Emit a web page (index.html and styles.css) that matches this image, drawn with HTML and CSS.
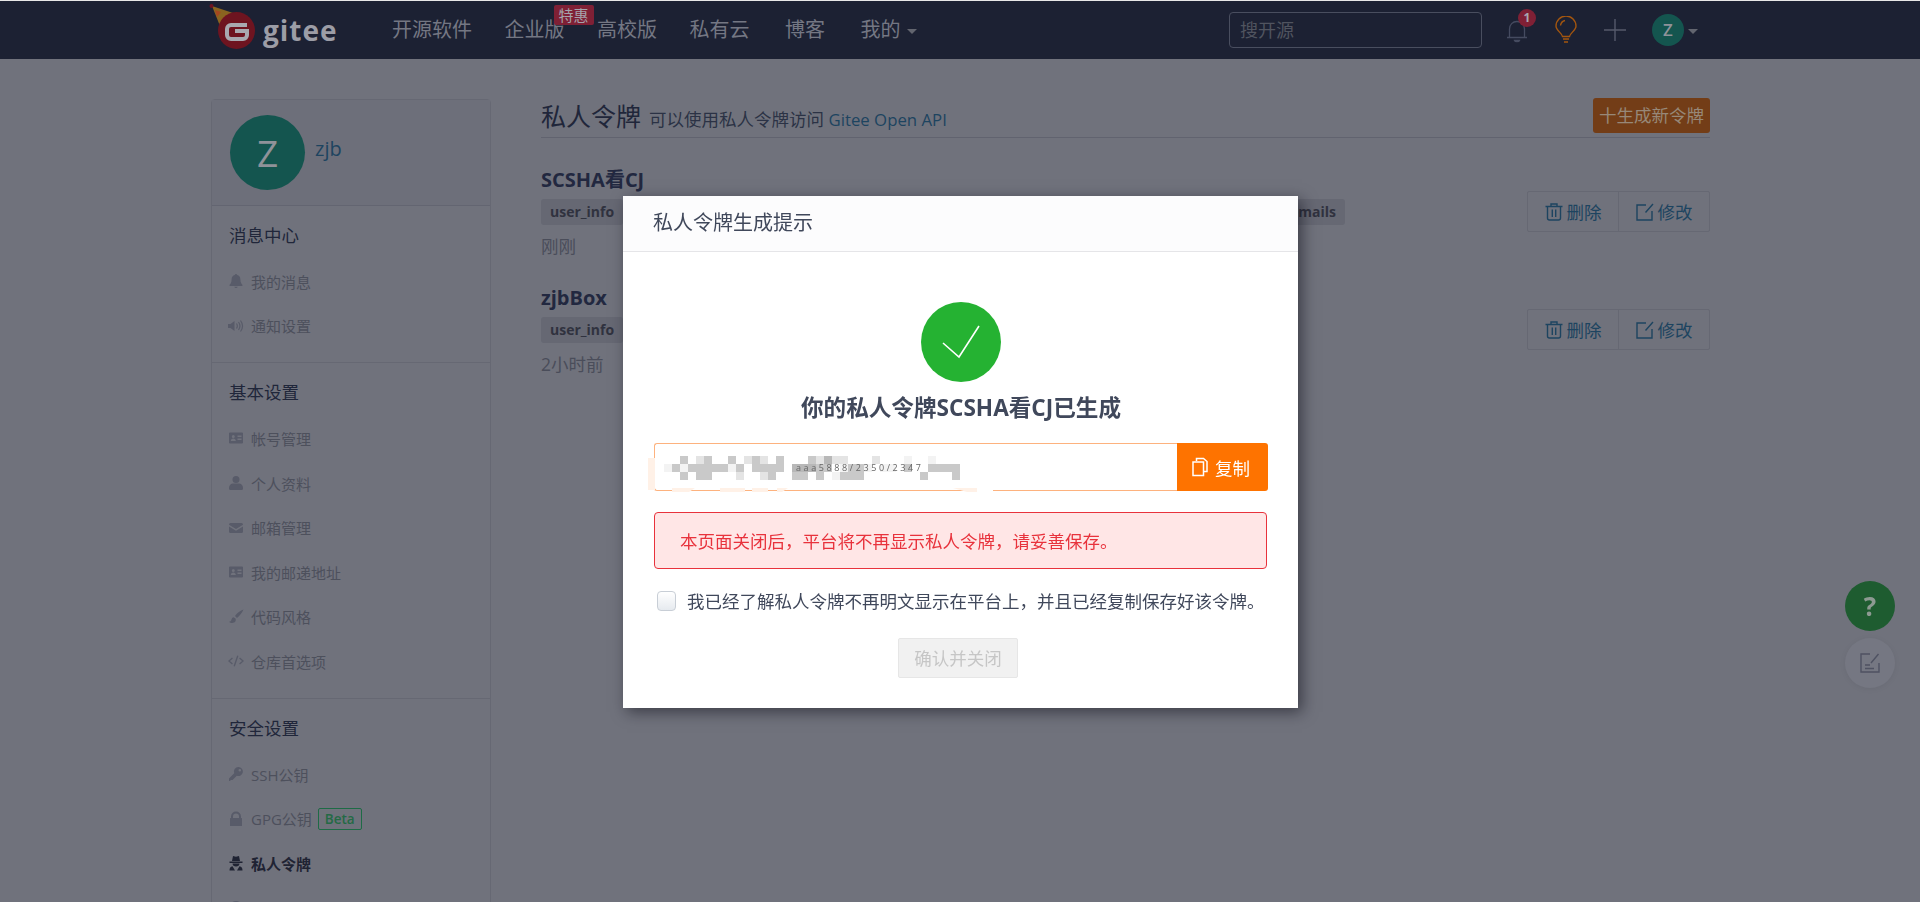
FILE: index.html
```html
<!DOCTYPE html>
<html lang="zh-CN">
<head>
    <meta charset="UTF-8">
    <meta name="viewport" content="width=device-width, initial-scale=1.0">
    <title>私人令牌 - Gitee</title>
    <link rel="stylesheet" href="styles.css">
</head>
<body>
    <svg class="icon-defs" aria-hidden="true">
        <symbol id="i-card" viewBox="0 0 16 16"><path fill-rule="evenodd" d="M2 2.500h12a1 1 0 0 1 1 1v9a1 1 0 0 1-1 1H2a1 1 0 0 1-1-1v-9a1 1 0 0 1 1-1zM5.300 5a1.500 1.500 0 1 0 0 3 1.500 1.500 0 0 0 0-3zM2.800 11h5c0-1.600-1-2.500-2.500-2.500S2.800 9.400 2.800 11zM9.500 5.500V7h4V5.500zM9.500 8.500V10h4V8.500z"/></symbol>
        <symbol id="i-trash" viewBox="0 0 18 18"><path fill="none" stroke="currentColor" stroke-width="1.400" d="M.5 3.500h17M2.500 3.500v11.500a2 2 0 0 0 2 2h9a2 2 0 0 0 2-2V3.500M6 3.500V1h6v2.500M7.300 6.500v7.500M10.700 6.500v7.500"/></symbol>
        <symbol id="i-edit" viewBox="0 0 18 18"><path fill="none" stroke="currentColor" stroke-width="1.400" d="M10 2H1v15h15V8M17 1l-7.500 8.500"/></symbol>
    </svg>

    <nav class="navbar">
        <a class="logo">
            <svg class="logo-mark" width="50" height="50" viewBox="0 0 50 50">
                <polygon points="4,4 25,11 12,24" fill="#8a6420"/>
                <path d="M7 8l6 2-4 5zM13 18l5-5 3 1-7 7z" fill="#a5461f"/>
                <circle cx="3.500" cy="4" r="2" fill="#6e1420"/>
                <circle cx="28.500" cy="28.500" r="18.500" fill="#6e1420"/>
                <path d="M39 23H23a4 4 0 0 0-4 4v6a4 4 0 0 0 4 4h12a4 4 0 0 0 4-4v-4H27" fill="none" stroke="#a8a9b0" stroke-width="4"/>
            </svg>
            <span class="logo-text">gitee</span>
        </a>
        <div class="nav-menu">
            <a class="nav-item">开源软件</a>
            <a class="nav-item nav-badged">企业版<span class="nav-badge">特惠</span></a>
            <a class="nav-item">高校版</a>
            <a class="nav-item">私有云</a>
            <a class="nav-item">博客</a>
            <a class="nav-item nav-mine">我的<i class="caret"></i></a>
        </div>
        <div class="nav-right">
            <div class="search-box">搜开源</div>
            <a class="nav-icon nav-bell">
                <svg width="22" height="26" viewBox="0 0 22 26"><path d="M1 20.500h20M3.500 20.500v-8.500c0-4.300 3.200-7.500 7.500-7.500s7.500 3.200 7.500 7.500v8.500M8.500 23.500c.5 1.500 4.500 1.500 5 0z" fill="none" stroke="#454b60" stroke-width="1.300"/></svg>
                <span class="bell-count">1</span>
            </a>
            <a class="nav-icon">
                <svg width="22" height="28" viewBox="0 0 22 28"><path d="M7.500 20.500C7 17 1 14.500 1 10a10 10 0 0 1 20 0c0 4.500-6 7-6.500 10.500zM5.500 9.500C6 6.500 7.500 5 10 4.500M8 23h6M9 26h4" fill="none" stroke="#a3560f" stroke-width="1.400"/></svg>
            </a>
            <a class="nav-icon">
                <svg width="22" height="22" viewBox="0 0 22 22"><path d="M0 11h22M11 0v22" stroke="#555a6b" stroke-width="1.400"/></svg>
            </a>
            <a class="nav-user"><span class="nav-avatar">Z</span><i class="caret"></i></a>
        </div>
    </nav>

    <div class="page">
        <aside class="sidebar">
            <div class="side-head">
                <span class="side-avatar">Z</span>
                <a class="side-name">zjb</a>
            </div>
            <section class="side-group">
                <h4>消息中心</h4>
                <a class="side-item"><svg viewBox="0 0 16 16"><path d="M8 1a1.300 1.300 0 0 0-1.200 1.100C4.800 2.600 3.600 4.300 3.600 6.500c0 3-1 4.200-2 5.300V13h12.800v-1.200c-1-1.100-2-2.300-2-5.300 0-2.200-1.200-3.900-3.200-4.400A1.300 1.300 0 0 0 8 1zM6.300 13.800a1.800 1.800 0 0 0 3.400 0z"/></svg>我的消息</a>
                <a class="side-item"><svg viewBox="0 0 16 16"><path d="M0 6h2.500L6.500 3v10l-4-3H0z"/><path d="M8.500 5.500c1 1.500 1 3.500 0 5M10.500 4c1.800 2.500 1.800 5.500 0 8M12.500 2.500c2.600 3.500 2.600 7.500 0 11" fill="none" stroke="currentColor" stroke-width="1.200"/></svg>通知设置</a>
            </section>
            <section class="side-group">
                <h4>基本设置</h4>
                <a class="side-item"><svg viewBox="0 0 16 16"><use href="#i-card"/></svg>帐号管理</a>
                <a class="side-item"><svg viewBox="0 0 16 16"><circle cx="8" cy="4.500" r="3.500"/><path d="M1 13c0-3 2-4.500 4-4.500h6c2 0 4 1.500 4 4.500v.5a1.500 1.500 0 0 1-1.500 1.500h-11A1.500 1.500 0 0 1 1 13.500z"/></svg>个人资料</a>
                <a class="side-item"><svg viewBox="0 0 16 16"><path d="M1 4.500A1.500 1.500 0 0 1 2.500 3h11A1.500 1.500 0 0 1 15 4.500v.3L8 9 1 4.800zM1 6.600v4.900A1.500 1.500 0 0 0 2.500 13h11a1.500 1.500 0 0 0 1.500-1.500V6.600l-7 4.200z"/></svg>邮箱管理</a>
                <a class="side-item"><svg viewBox="0 0 16 16"><use href="#i-card"/></svg>我的邮递地址</a>
                <a class="side-item"><svg viewBox="0 0 16 16"><path d="M15.500.5c-3 1-6.500 3.500-8.500 6.500l2 2c2.500-2 5-5 6.500-8.500zM5.500 8.200C3.500 8.500 3.800 10.500 3 11.800c-.5.800-1.500 1-2 1 1.500 1.700 5 1.700 6.300-.2.800-1.200.5-2.700-.1-3.300z"/></svg>代码风格</a>
                <a class="side-item"><svg viewBox="0 0 18 16"><path d="M5 4.500L1 8l4 3.500M13 4.500L17 8l-4 3.500M11 2L7 14" fill="none" stroke="currentColor" stroke-width="1.500"/></svg>仓库首选项</a>
            </section>
            <section class="side-group">
                <h4>安全设置</h4>
                <a class="side-item"><svg viewBox="0 0 16 16"><path fill-rule="evenodd" d="M10.500 1a4.500 4.500 0 1 1-1.700 8.700L4.500 14H2.800L2 15H1v-2.500l5.200-5.300A4.500 4.500 0 0 1 10.500 1zM11.800 3a1.300 1.300 0 1 0 0 2.600 1.300 1.300 0 0 0 0-2.600z"/></svg>SSH公钥</a>
                <a class="side-item"><svg viewBox="0 0 16 16"><path d="M3 7V5.500a5 5 0 0 1 10 0V7h.5a.5.500 0 0 1 .5.500V15H2V7.500a.5.500 0 0 1 .5-.5zM5 7h6V5.500a3 3 0 0 0-6 0z"/></svg>GPG公钥<span class="beta">Beta</span></a>
                <a class="side-item active"><svg viewBox="0 0 16 16"><path d="M5 1L8 1.800 11 1l1 5H4zM1.500 6.500h13V8h-13zM4.500 8.500h7c0 1.800-1.500 3-3.500 3s-3.500-1.200-3.500-3zM1.500 15.500c0-2.500 1-4 3-4.300L7 15.500zM14.500 15.500c0-2.500-1-4-3-4.300L9 15.500z"/></svg>私人令牌</a>
                <a class="side-item"><svg viewBox="0 0 16 16"><circle cx="8" cy="8" r="7"/></svg></a>
            </section>
        </aside>

        <main class="content">
            <div class="content-head">
                <div class="head-text">
                    <span class="head-title">私人令牌</span>
                    <span class="head-desc">可以使用私人令牌访问 <a>Gitee Open API</a></span>
                </div>
                <a class="btn-new">十生成新令牌</a>
            </div>

            <div class="token-row">
                <div class="token-info">
                    <div class="token-name">SCSHA看CJ</div>
                    <div class="token-tags token-tags-full">
                        <span class="tag">user_info</span>
                        <span class="tag">emails</span>
                    </div>
                    <div class="token-time">刚刚</div>
                </div>
                <div class="token-actions">
                    <a class="action"><svg width="18" height="18"><use href="#i-trash"/></svg>删除</a>
                    <a class="action"><svg width="18" height="18"><use href="#i-edit"/></svg>修改</a>
                </div>
            </div>

            <div class="token-row">
                <div class="token-info">
                    <div class="token-name">zjbBox</div>
                    <div class="token-tags">
                        <span class="tag">user_info</span>
                    </div>
                    <div class="token-time">2小时前</div>
                </div>
                <div class="token-actions">
                    <a class="action"><svg width="18" height="18"><use href="#i-trash"/></svg>删除</a>
                    <a class="action"><svg width="18" height="18"><use href="#i-edit"/></svg>修改</a>
                </div>
            </div>
        </main>
    </div>

    <div class="float-btns">
        <a class="float-help">?</a>
        <a class="float-note">
            <svg width="20" height="20" viewBox="0 0 20 20"><path d="M10 1H1v18h18v-9M18.500 1L11 10M5 12h5M5 15.500h9" fill="none" stroke="#4f5262" stroke-width="1.400"/></svg>
        </a>
    </div>

    <div class="modal">
        <div class="modal-head">私人令牌生成提示</div>
        <div class="modal-body">
            <div class="success-mark">
                <svg width="80" height="80" viewBox="0 0 80 80"><path d="M22 41l16 14 20-31" fill="none" stroke="#fff" stroke-width="1.600"/></svg>
            </div>
            <h3 class="modal-title">你的私人令牌SCSHA看CJ已生成</h3>

            <div class="token-field">
                <div class="token-input">
                    <!-- 令牌打码 -->
                    <svg class="token-mosaic" width="360" height="50" viewBox="0 0 360 50">
                        <g fill="#fff1e7">
                            <rect x="0" y="9" width="7" height="32"/>
                            <path d="M24 39h23l-6 4H24zM72 39h25v4H72zM104 39h16v4h-16zM129 39h11l-6 4h-5zM305 39h24v4h-10z"/>
                        </g>
                        <path d="M329 41h16v2h-16z" fill="#fff"/>
                        <g transform="translate(16 7)">
                            <path fill="#e4e4e4" d="M32 0h8v8h-8zM80 0h8v8h-8zM96 0h8v8h-8zM152 0h8v8h-8zM168 0h16v8h-16zM208 0h8v8h-8zM72 16h8v8h-8zM96 16h8v8h-8zM136 16h8v8h-8z"/>
                            <path fill="#f3f3f3" d="M0 8h8v8H0zM16 8h8v8h-8zM64 8h8v8h-8zM240 0h8v8h-8zM264 0h8v8h-8zM176 8h8v8h-8zM200 8h8v8h-8zM216 8h16v8h-16zM168 16h8v8h-8z"/>
                            <path fill="#c9c9c9" d="M16 0h8v8h-8zM40 0h8v8h-8zM64 0h8v8h-8zM88 0h8v8h-8zM112 0h8v8h-8zM144 0h8v8h-8zM8 8h8v8H8zM24 8h40v8H24zM72 8h8v8h-8zM88 8h32v8H88zM152 8h16v8h-16zM184 8h16v8h-16zM240 8h8v8h-8zM264 8h8v8h-8zM16 16h8v8h-8zM32 16h16v8H32zM104 16h8v8h-8zM128 16h16v8h-16zM152 16h8v8h-8zM176 16h24v8h-24zM256 16h8v8h-8zM288 16h8v8h-8zM272 8h24v8h-24z"/>
                            <path fill="#b8b8b8" d="M160 0h8v8h-8zM128 8h24v8h-24z"/>
                        </g>
                    </svg>
                    <span class="token-scrap">aaa5888/2350/2347</span>
                </div>
                <a class="btn-copy">
                    <svg width="16" height="20" viewBox="0 0 16 20"><path d="M4.500 4V1.500h7l3.500 3V14.500H11.500M1 5h10.500v13.500H1z" fill="none" stroke="#fff" stroke-width="1.500"/></svg>
                    复制
                </a>
            </div>

            <div class="alert-error">本页面关闭后，平台将不再显示私人令牌，请妥善保存。</div>

            <label class="confirm-check">
                <span class="checkbox"></span>
                <span class="confirm-text">我已经了解私人令牌不再明文显示在平台上，并且已经复制保存好该令牌。</span>
            </label>

            <div class="modal-actions">
                <a class="btn-confirm">确认并关闭</a>
            </div>
        </div>
    </div>
</body>
</html>
```

FILE: styles.css
```css
* {
    box-sizing: border-box;
}

html, body {
    height: 902px;
    margin: 0;
    overflow: hidden;
}

body {
    font-family: "Open Sans", "Noto Sans CJK SC", sans-serif;
    font-size: 15px;
    background-color: #e8e8e8;
    color: #20263a;
    padding-top: 1px;
}

a {
    color: inherit;
    text-decoration: none;
}

.icon-defs {
    display: none;
}

/* 顶部导航 */
.navbar {
    height: 58px;
    background-color: #1c2133;
    display: flex;
    align-items: center;
    padding: 0 222px 0 208px;
}

.logo {
    display: flex;
    align-items: center;
    width: 184px;
}

.logo-mark {
    display: block;
    margin-top: -6px;
}

.logo-text {
    font-size: 28px;
    font-weight: 700;
    letter-spacing: 1px;
    color: #9c9da6;
    margin-left: 5px;
    line-height: 30px;
}

.nav-menu {
    display: flex;
    gap: 32.5px;
    font-size: 20px;
    color: #747783;
    line-height: 30px;
}

.nav-item:nth-child(n+5) {
    margin-left: 3px;
}

.nav-badged {
    position: relative;
}

.nav-badge {
    position: absolute;
    left: 49px;
    top: -10px;
    width: 40px;
    height: 20px;
    background-color: #7f2035;
    border-radius: 2px;
    color: #a5a3ac;
    font-size: 15px;
    line-height: 20px;
    text-align: center;
}

.nav-mine {
    display: flex;
    align-items: center;
    gap: 6px;
}

.caret {
    display: block;
    width: 0;
    height: 0;
    border-left: 5px solid transparent;
    border-right: 5px solid transparent;
    border-top: 5px solid #62656f;
    margin-top: 3px;
}

.nav-right {
    margin-left: auto;
    display: flex;
    align-items: center;
    gap: 27px;
}

.search-box {
    width: 253px;
    height: 36px;
    border: 1px solid #494e5f;
    border-radius: 4px;
    padding-left: 10px;
    font-size: 18px;
    line-height: 34px;
    color: #50545f;
    margin-right: -3px;
}

.nav-icon {
    display: block;
    width: 22px;
    position: relative;
}

.nav-icon svg {
    display: block;
}

.bell-count {
    position: absolute;
    left: 12px;
    top: -8px;
    width: 18px;
    height: 18px;
    border-radius: 50%;
    background-color: #7f2035;
    color: #a8a7b0;
    font-size: 12px;
    font-weight: 700;
    line-height: 18px;
    text-align: center;
}

.nav-user {
    display: flex;
    align-items: center;
    gap: 4px;
    margin-left: -1px;
}

.nav-avatar {
    width: 32px;
    height: 32px;
    border-radius: 50%;
    background-color: #14554f;
    color: #8f9299;
    font-size: 17px;
    font-weight: 600;
    line-height: 32px;
    text-align: center;
}

/* 页面主体 */
.page {
    height: 843px;
    overflow: hidden;
    background-color: #70727c;
    display: flex;
    padding: 40px 210px 0 211px;
    gap: 50px;
}

.sidebar {
    flex: 0 0 280px;
    height: 900px;
    border: 1px solid #666873;
    border-radius: 4px 4px 0 0;
}

.side-head {
    height: 106px;
    padding: 15px 18px;
    display: flex;
    gap: 10px;
    background-color: #6d6f7a;
    border-bottom: 1px solid #636571;
}

.side-avatar {
    width: 75px;
    height: 75px;
    border-radius: 50%;
    background-color: #14554f;
    color: #8f9299;
    font-size: 37px;
    line-height: 75px;
    text-align: center;
}

.side-name {
    color: #1d4460;
    font-size: 20px;
    line-height: 28px;
    margin-top: 20px;
}

.side-group {
    padding: 14px 0 13px;
    border-bottom: 1px solid #666873;
}

.side-group h4 {
    margin: -1px 0 9px 17px;
    font-size: 17.5px;
    font-weight: 400;
    line-height: 32px;
    color: #20263a;
}

.side-item {
    display: flex;
    align-items: center;
    height: 44.6px;
    padding: 0 0 2px 16px;
    font-size: 15px;
    color: #4d505c;
}

.side-item svg {
    width: 16px;
    height: 16px;
    margin-right: 7px;
    fill: #585b69;
    color: #585b69;
    flex: none;
}

.side-item.active {
    color: #1f2333;
    font-weight: 700;
}

.side-item.active svg {
    fill: #1f2333;
}

.beta {
    margin-left: 6px;
    height: 22px;
    padding: 0 6px;
    border: 1px solid #1e6b46;
    border-radius: 2px;
    color: #246a45;
    font-size: 13.5px;
    font-weight: 600;
    line-height: 20px;
}

.content {
    flex: 1;
}

.content-head {
    display: flex;
    justify-content: space-between;
    align-items: center;
    height: 40px;
    margin-top: -1px;
    padding-bottom: 5px;
    border-bottom: 1px solid #61636f;
}

.head-title {
    font-size: 25px;
    color: #20263a;
    margin-right: 4px;
}

.head-desc {
    font-size: 17.5px;
    color: #2b3245;
}

.head-desc a {
    color: #1d4460;
    font-size: 16.8px;
}

.btn-new {
    width: 117px;
    height: 35px;
    background-color: #733d17;
    border-radius: 3px;
    color: #978878;
    font-size: 17.5px;
    line-height: 34px;
    text-align: center;
}

.token-row {
    display: flex;
    justify-content: space-between;
    height: 118px;
}

.content-head + .token-row {
    margin-top: 31px;
}

.token-info {
    flex: 0 0 804px;
}

.token-name {
    font-size: 20px;
    font-weight: 700;
    line-height: 22px;
    margin-bottom: 8px;
    color: #222840;
}

.token-tags {
    display: flex;
    gap: 10px;
}

.token-tags-full {
    justify-content: space-between;
}

.tag {
    height: 26px;
    padding: 0 9px;
    background-color: #666873;
    border-radius: 3px;
    font-size: 14px;
    font-weight: 700;
    line-height: 25px;
    color: #30323f;
}

.token-time {
    margin-top: 9px;
    font-size: 17.5px;
    line-height: 24px;
    color: #4a4d5a;
}

.token-actions {
    display: flex;
    width: 183px;
    height: 41px;
    margin-top: 22px;
    border: 1px solid #666873;
    border-radius: 2px;
}

.action {
    flex: 1;
    display: flex;
    align-items: center;
    justify-content: center;
    gap: 4px;
    font-size: 17.5px;
    color: #1d4460;
}

.action + .action {
    border-left: 1px solid #666873;
}

/* 右下悬浮按钮 */
.float-btns {
    position: fixed;
    top: 581px;
    right: 25px;
    display: flex;
    flex-direction: column;
    gap: 7px;
}

.float-help,
.float-note {
    width: 50px;
    height: 50px;
    border-radius: 50%;
    display: flex;
    align-items: center;
    justify-content: center;
}

.float-help {
    background-color: #1e5c30;
    color: #8d9a92;
    font-size: 26px;
    font-weight: 700;
}

.float-note {
    background-color: #757782;
    box-shadow: 0 1px 6px rgba(0, 0, 0, 0.06);
}

/* 生成提示弹窗 */
.modal {
    position: fixed;
    top: 196px;
    left: 623px;
    width: 675px;
    height: 512px;
    background-color: #fff;
    box-shadow: 4px 4px 14px rgba(15, 15, 25, 0.55);
}

.modal-head {
    height: 56px;
    padding-left: 30px;
    background-color: #fcfcfd;
    border-bottom: 1px solid #e5e5e8;
    font-size: 20px;
    line-height: 54px;
    color: #40485b;
}

.modal-body {
    padding: 50px 30px 0 31px;
}

.success-mark {
    width: 80px;
    height: 80px;
    margin: 0 auto;
    border-radius: 50%;
    background-color: #25b232;
}

.success-mark svg {
    display: block;
}

.modal-title {
    margin: 11px 0 20px;
    font-size: 22.6px;
    font-weight: 700;
    line-height: 30px;
    text-align: center;
    color: #40485b;
}

.token-field {
    display: flex;
    height: 48px;
}

.token-input {
    flex: 1;
    position: relative;
    border: 1px solid #fdb27e;
    border-right: none;
    border-radius: 3px 0 0 3px;
}

.token-mosaic {
    position: absolute;
    left: -7px;
    top: 5px;
}

.token-scrap {
    position: absolute;
    left: 141px;
    top: 19px;
    font-size: 9px;
    letter-spacing: 2.6px;
    line-height: 9px;
    white-space: nowrap;
    color: #666;
}

.btn-copy {
    flex: 0 0 91px;
    display: flex;
    align-items: center;
    justify-content: center;
    gap: 7px;
    padding-right: 3px;
    background-color: #fe7300;
    border-radius: 0 3px 3px 0;
    color: #fff;
    font-size: 17.5px;
}

.alert-error {
    height: 57px;
    margin: 21px 1px 0 0;
    padding-left: 25px;
    background-color: #ffe6e6;
    border: 1px solid #e8323c;
    border-radius: 4px;
    color: #e8323c;
    font-size: 17.5px;
    line-height: 56px;
}

.confirm-check {
    display: flex;
    align-items: center;
    gap: 11px;
    height: 20px;
    margin-top: 22px;
    padding-left: 3px;
    font-size: 17.5px;
    color: #40485b;
    white-space: nowrap;
}

.confirm-text {
    margin-top: -2px;
}

.checkbox {
    flex: none;
    width: 19px;
    height: 20px;
    border: 1px solid #c8ced6;
    border-radius: 4px;
    background: linear-gradient(#fff, #e6eaef);
}

.modal-actions {
    display: flex;
    justify-content: center;
    margin-top: 27px;
    padding-right: 6px;
}

.btn-confirm {
    width: 120px;
    height: 40px;
    background-color: #f1f1f1;
    border: 1px solid #e6e6e6;
    border-radius: 2px;
    color: #c6c6c6;
    font-size: 17.5px;
    line-height: 38px;
    text-align: center;
}
```
